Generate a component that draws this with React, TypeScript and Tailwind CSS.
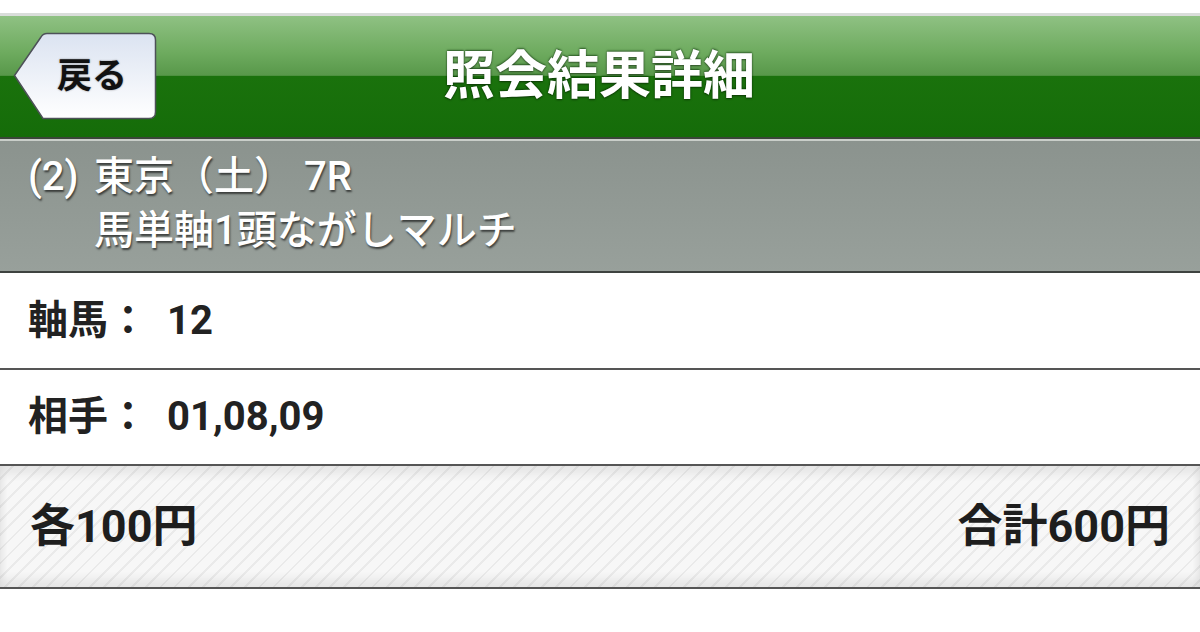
import React from "react";

const font = { fontFamily: '"Roboto", "Noto Sans CJK JP", sans-serif' };

function BackButton() {
  return (
    <div className="absolute left-[13px] top-[16px] h-[88px] w-[144px]">
      <svg width="144" height="88" viewBox="0 0 144 88" className="absolute inset-0">
        <defs>
          <linearGradient id="bb" x1="0" y1="0" x2="0" y2="1">
            <stop offset="0" stopColor="#dbe3f1" />
            <stop offset="1" stopColor="#ffffff" />
          </linearGradient>
        </defs>
        <path
          d="M 34 1.5 L 136 1.5 Q 142.5 1.5 142.5 8 L 142.5 80 Q 142.5 86.5 136 86.5 L 30 86.5 L 1.5 43.5 L 28 5 Q 30 1.5 34 1.5 Z"
          fill="url(#bb)"
          stroke="#4d5158"
          strokeWidth="1.5"
        />
      </svg>
      <div className="absolute inset-0 flex items-center pl-[44px]">
        <span
          className="text-[35px] font-bold leading-none text-[#111] [text-shadow:0_0_2px_rgba(0,0,0,0.45)]"
          style={font}
        >
          戻る
        </span>
      </div>
    </div>
  );
}

export default function App() {
  return (
    <div className="w-[1200px] h-[632px] bg-white overflow-hidden" style={font}>
      <div className="h-[13px] bg-white" />
      <div className="h-[3px] bg-[#d9ddda]" />
      <header className="relative flex h-[121px] items-center justify-center bg-[linear-gradient(to_bottom,#8fc183_0%,#6eab5f_30%,#58984a_49%,#1a720c_50%,#156c09_100%)]">
        <BackButton />
        <h1 className="text-[52px] font-bold leading-none text-white [text-shadow:0_-1px_2px_rgba(0,40,0,0.6),0_1px_2px_rgba(0,0,0,0.5)] ml-[-2px]">
          照会結果詳細
        </h1>
      </header>
      <div className="h-[2px] bg-[#3b4639]" />
      <div className="h-[2px] bg-[#c9cec9]" />
      <section className="flex h-[130px] flex-col justify-center bg-[linear-gradient(to_bottom,#8b938e,#98a09b)] pl-[28px] pb-[4px] text-[40px] font-medium leading-[54px] text-white [text-shadow:1px_2px_2px_rgba(0,0,0,0.6)]">
        <div className="flex">
          <span className="w-[66px]">(2)</span>
          <span>東京（土） 7R</span>
        </div>
        <div className="pl-[66px]">馬単軸1頭ながしマルチ</div>
      </section>
      <div className="h-[2px] bg-[#3e4340]" />
      <div className="flex h-[95px] items-center pl-[28px] text-[40px] font-bold text-[#222]">
        <span>軸馬：</span>
        <span className="ml-[19px]">12</span>
      </div>
      <div className="h-[2px] bg-[#555]" />
      <div className="flex h-[94px] items-center pl-[28px] text-[40px] font-bold text-[#222]">
        <span>相手：</span>
        <span className="ml-[19px]">01,08,09</span>
      </div>
      <div className="h-[2px] bg-[#555]" />
      <div className="flex h-[121px] items-center justify-between bg-[repeating-linear-gradient(135deg,#f7f7f7_0px,#f7f7f7_8px,#eaeaea_8px,#eaeaea_10px)] px-[30px] text-[45px] font-bold text-[#1e1e1e] shadow-[inset_0_8px_10px_rgba(0,0,0,0.07),inset_0_-8px_10px_rgba(0,0,0,0.07)]">
        <span>各100円</span>
        <span>合計600円</span>
      </div>
      <div className="h-[2px] bg-[#555]" />
    </div>
  );
}
